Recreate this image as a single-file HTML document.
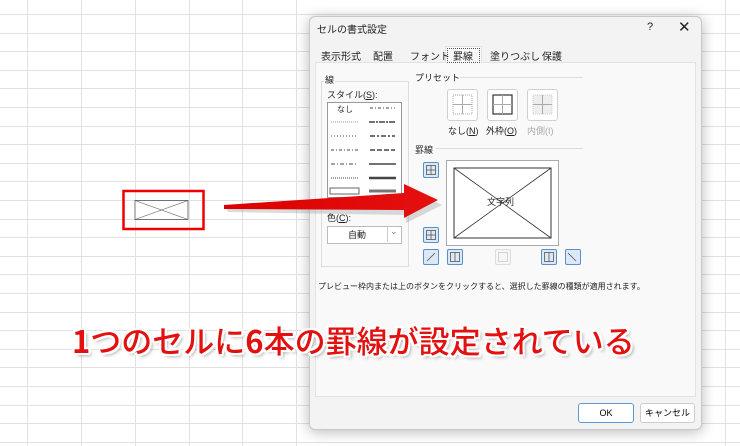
<!DOCTYPE html>
<html><head><meta charset="utf-8"><style>
body{margin:0;width:740px;height:446px;overflow:hidden;background:#fff;position:relative;font-family:"Liberation Sans","Noto Sans CJK JP",sans-serif;}
.a{position:absolute;}
.t{font-size:9px;color:#222;white-space:nowrap;}
.tab{font-size:10px;}
.btn{position:absolute;width:14px;height:14px;border:1px solid #5b8fc7;background:#dbe8f6;border-radius:2px;}
.pb{position:absolute;width:29px;height:30px;border:1px solid #d0d0d0;background:#fff;border-radius:3px;}
</style></head><body>
<svg class="a" style="left:0;top:0" width="740" height="446">
<g stroke="#e1e1e1" stroke-width="1">
<line x1="27.5" y1="0" x2="27.5" y2="446"/><line x1="81.5" y1="0" x2="81.5" y2="446"/><line x1="135.5" y1="0" x2="135.5" y2="446"/><line x1="189.5" y1="0" x2="189.5" y2="446"/><line x1="242.5" y1="0" x2="242.5" y2="446"/><line x1="296.5" y1="0" x2="296.5" y2="446"/><line x1="725.5" y1="0" x2="725.5" y2="446"/>
<line x1="0" y1="14.5" x2="740" y2="14.5"/><line x1="0" y1="33.5" x2="740" y2="33.5"/><line x1="0" y1="51.5" x2="740" y2="51.5"/><line x1="0" y1="70.5" x2="740" y2="70.5"/><line x1="0" y1="88.5" x2="740" y2="88.5"/><line x1="0" y1="107.5" x2="740" y2="107.5"/><line x1="0" y1="126.5" x2="740" y2="126.5"/><line x1="0" y1="144.5" x2="740" y2="144.5"/><line x1="0" y1="163.5" x2="740" y2="163.5"/><line x1="0" y1="181.5" x2="740" y2="181.5"/><line x1="0" y1="200.5" x2="740" y2="200.5"/><line x1="0" y1="219.5" x2="740" y2="219.5"/><line x1="0" y1="237.5" x2="740" y2="237.5"/><line x1="0" y1="256.5" x2="740" y2="256.5"/><line x1="0" y1="274.5" x2="740" y2="274.5"/><line x1="0" y1="293.5" x2="740" y2="293.5"/><line x1="0" y1="312.5" x2="740" y2="312.5"/><line x1="0" y1="330.5" x2="740" y2="330.5"/><line x1="0" y1="349.5" x2="740" y2="349.5"/><line x1="0" y1="367.5" x2="740" y2="367.5"/><line x1="0" y1="386.5" x2="740" y2="386.5"/><line x1="0" y1="405.5" x2="740" y2="405.5"/><line x1="0" y1="423.5" x2="740" y2="423.5"/><line x1="0" y1="442.5" x2="740" y2="442.5"/>
</g>
<rect x="135" y="200.5" width="53" height="19" fill="#fff" stroke="#555" stroke-width="0.8"/>
<line x1="135" y1="200.5" x2="188" y2="219.5" stroke="#555" stroke-width="0.6"/><line x1="135" y1="219.5" x2="188" y2="200.5" stroke="#555" stroke-width="0.6"/>
<rect x="123.5" y="191" width="80" height="38" fill="none" stroke="#e00" stroke-width="2.5"/>
</svg>
<div class="a" style="left:309px;top:16px;width:391px;height:412px;background:#f3f3f3;border:1px solid #c8c8c8;border-radius:6px;box-shadow:0 2px 14px rgba(0,0,0,.28);"></div>
<div class="a t" style="left:317px;top:21px;font-size:10px">セルの書式設定</div>
<div class="a t" style="left:647px;top:21px;font-size:11px">?</div>
<div class="a t" style="left:678px;top:18px;font-size:15px">✕</div>
<div class="a" style="left:315px;top:62px;width:379px;height:333px;background:#f9f9f9;border:1px solid #e2e2e2;"></div>
<div class="a" style="left:445px;top:46px;width:35px;height:16px;background:#f9f9f9;border:1px solid #e2e2e2;border-bottom:none"></div>
<div class="a" style="left:447px;top:48px;width:31px;height:13px;border:1px dotted #555"></div>
<div class="a t tab" style="left:321px;top:48px">表示形式</div>
<div class="a t tab" style="left:373px;top:48px">配置</div>
<div class="a t tab" style="left:410px;top:48px">フォント</div>
<div class="a t tab" style="left:453px;top:48px">罫線</div>
<div class="a t tab" style="left:490px;top:48px">塗りつぶし</div>
<div class="a t tab" style="left:542px;top:48px">保護</div>
<div class="a" style="left:321px;top:81px;width:86px;height:184px;border:1px solid #ddd"></div>
<div class="a t" style="left:324px;top:73px;background:#f9f9f9;padding:0 1px">線</div>
<div class="a t" style="left:327px;top:88px">スタイル(<u>S</u>):</div>
<div class="a" style="left:327px;top:102px;width:73px;height:94px;background:#fff;border:1px solid #999"></div>
<div class="a t" style="left:337px;top:104px;font-size:8px">なし</div>
<svg class="a" style="left:328px;top:103px" width="72" height="92">
<g stroke="#444" stroke-width="1">
<line x1="42" y1="5" x2="67" y2="5" stroke-dasharray="3 2 1 2"/>
<line x1="3" y1="19" x2="30" y2="19" stroke="#999" stroke-dasharray="1 1"/><line x1="41" y1="19" x2="68" y2="19" stroke-width="1.5" stroke-dasharray="6 1 2 1"/>
<line x1="3" y1="33" x2="30" y2="33" stroke-dasharray="1 2"/><line x1="42" y1="33" x2="67" y2="33" stroke-width="1.5" stroke-dasharray="5 2 2 2"/>
<line x1="3" y1="47" x2="30" y2="47" stroke-dasharray="3 2 1 2"/><line x1="42" y1="47" x2="67" y2="47" stroke-width="1.5" stroke-dasharray="5 2"/>
<line x1="3" y1="61" x2="30" y2="61" stroke-dasharray="4 2 1 2"/><line x1="41" y1="61" x2="68" y2="61" stroke-width="1.5"/>
<line x1="3" y1="75" x2="30" y2="75" stroke-dasharray="1 1"/><line x1="41" y1="75" x2="68" y2="75" stroke-width="2.5"/>
<rect x="2" y="85" width="29" height="6" fill="none" stroke="#666"/><line x1="41" y1="88" x2="68" y2="88" stroke-width="3" stroke="#777"/>
</g></svg>
<div class="a t" style="left:327px;top:211px">色(<u>C</u>):</div>
<div class="a" style="left:327px;top:226px;width:73px;height:16px;background:#fff;border:1px solid #bbb"></div>
<div class="a" style="left:387px;top:227px;width:1px;height:15px;background:#ccc"></div>
<div class="a t" style="left:348px;top:228px">自動</div>
<div class="a t" style="left:390px;top:226px;color:#777">⌄</div>
<div class="a t" style="left:415px;top:71px">プリセット</div>
<div class="a" style="left:460px;top:77px;width:123px;height:1px;background:#ddd"></div>
<div class="pb" style="left:447px;top:89px"></div>
<div class="pb" style="left:487px;top:89px"></div>
<div class="pb" style="left:527px;top:89px"></div>
<svg class="a" style="left:447px;top:89px" width="112" height="32">
<rect x="6" y="6" width="19" height="19" fill="none" stroke="#aaa" stroke-dasharray="1 1"/><line x1="15.5" y1="6" x2="15.5" y2="25" stroke="#aaa"/><line x1="6" y1="15.5" x2="25" y2="15.5" stroke="#aaa"/>
<rect x="46" y="6" width="19" height="19" fill="none" stroke="#333" stroke-width="1.2"/><line x1="55.5" y1="6" x2="55.5" y2="25" stroke="#aaa"/><line x1="46" y1="15.5" x2="65" y2="15.5" stroke="#aaa"/>
<rect x="86" y="6" width="19" height="19" fill="#eee" stroke="#ccc" stroke-dasharray="1 1"/><line x1="95.5" y1="6" x2="95.5" y2="25" stroke="#aaa"/><line x1="86" y1="15.5" x2="105" y2="15.5" stroke="#aaa"/>
</svg>
<div class="a t" style="left:448px;top:124px">なし(<u>N</u>)</div>
<div class="a t" style="left:486px;top:124px">外枠(<u>O</u>)</div>
<div class="a t" style="left:527px;top:124px;color:#aaa">内側(I)</div>
<div class="a t" style="left:415px;top:143px">罫線</div>
<div class="a" style="left:436px;top:148px;width:147px;height:1px;background:#ddd"></div>
<div class="a" style="left:446px;top:160px;width:111px;height:84px;background:#fff;border:1px solid #aaa"></div>
<svg class="a" style="left:446px;top:160px" width="113" height="86">
<rect x="8" y="8" width="97" height="70" fill="none" stroke="#333" stroke-width="1"/>
<line x1="8" y1="8" x2="105" y2="78" stroke="#333" stroke-width="0.8"/><line x1="8" y1="78" x2="105" y2="8" stroke="#333" stroke-width="0.8"/>
</svg>
<div class="a t" style="left:487px;top:195px;background:transparent">文字列</div>
<div class="btn" style="left:423px;top:162px"></div>
<div class="btn" style="left:423px;top:227px"></div>
<div class="btn" style="left:423px;top:249px"></div>
<div class="btn" style="left:447px;top:249px"></div>
<div class="btn" style="left:495px;top:249px;background:#f6f6f6;border-color:#ddd"></div>
<div class="btn" style="left:541px;top:249px"></div>
<div class="btn" style="left:565px;top:249px"></div>
<svg class="a" style="left:423px;top:162px" width="160" height="104">
<g stroke="#555" fill="none" stroke-width="0.8">
<rect x="3.5" y="3.5" width="9" height="9"/><line x1="8" y1="3.5" x2="8" y2="12.5"/><line x1="3.5" y1="8" x2="12.5" y2="8"/>
<rect x="3.5" y="68.5" width="9" height="9"/><line x1="8" y1="68.5" x2="8" y2="77.5"/><line x1="3.5" y1="73" x2="12.5" y2="73"/>
<line x1="4" y1="99" x2="12" y2="91"/>
<rect x="27.5" y="90.5" width="9" height="9"/><line x1="32" y1="90.5" x2="32" y2="99.5"/>
<rect x="75.5" y="90.5" width="9" height="9" stroke="#ccc"/>
<rect x="121.5" y="90.5" width="9" height="9"/><line x1="126" y1="90.5" x2="126" y2="99.5"/>
<line x1="145" y1="91" x2="153" y2="99"/>
</g></svg>
<div class="a t" style="left:318px;top:281px;font-size:8px">プレビュー枠内または上のボタンをクリックすると、選択した罫線の種類が適用されます。</div>
<div class="a" style="left:578px;top:403px;width:54px;height:18px;background:#fff;border:1px solid #5b9bd5;border-radius:3px;font-size:9px;text-align:center;line-height:18px">OK</div>
<div class="a" style="left:640px;top:403px;width:53px;height:18px;background:#fff;border:1px solid #ccc;border-radius:3px;font-size:9px;text-align:center;line-height:18px">キャンセル</div>
<svg class="a" style="left:0;top:0" width="740" height="446">
<defs><linearGradient id="g" x1="0" x2="1"><stop offset="0" stop-color="#d00"/><stop offset="1" stop-color="#e41010"/></linearGradient></defs>
<path d="M226 209 L224 205 L404 193 L404 184 L440 202 L404 220 L404 212 Z" fill="#999" opacity=".35" transform="translate(2,3)"/>
<path d="M224 209 L224 205 L404 193 L404 184 L438 200 L404 218 L404 210 Z" fill="url(#g)"/>
</svg>
<div class="a" style="left:72px;top:317px;font-size:31px;font-weight:500;color:#e31010;white-space:nowrap;letter-spacing:0px;font-family:'Noto Sans CJK JP',sans-serif;text-shadow:2px 2px 0 #fff,-2px -2px 0 #fff,2px -2px 0 #fff,-2px 2px 0 #fff,0 2px 0 #fff,2px 0 0 #fff,3px 3px 3px rgba(0,0,0,.3)"><b style="font-weight:bold">1</b>つのセルに<b style="font-weight:bold">6</b>本の罫線が設定されている</div>
</body></html>
